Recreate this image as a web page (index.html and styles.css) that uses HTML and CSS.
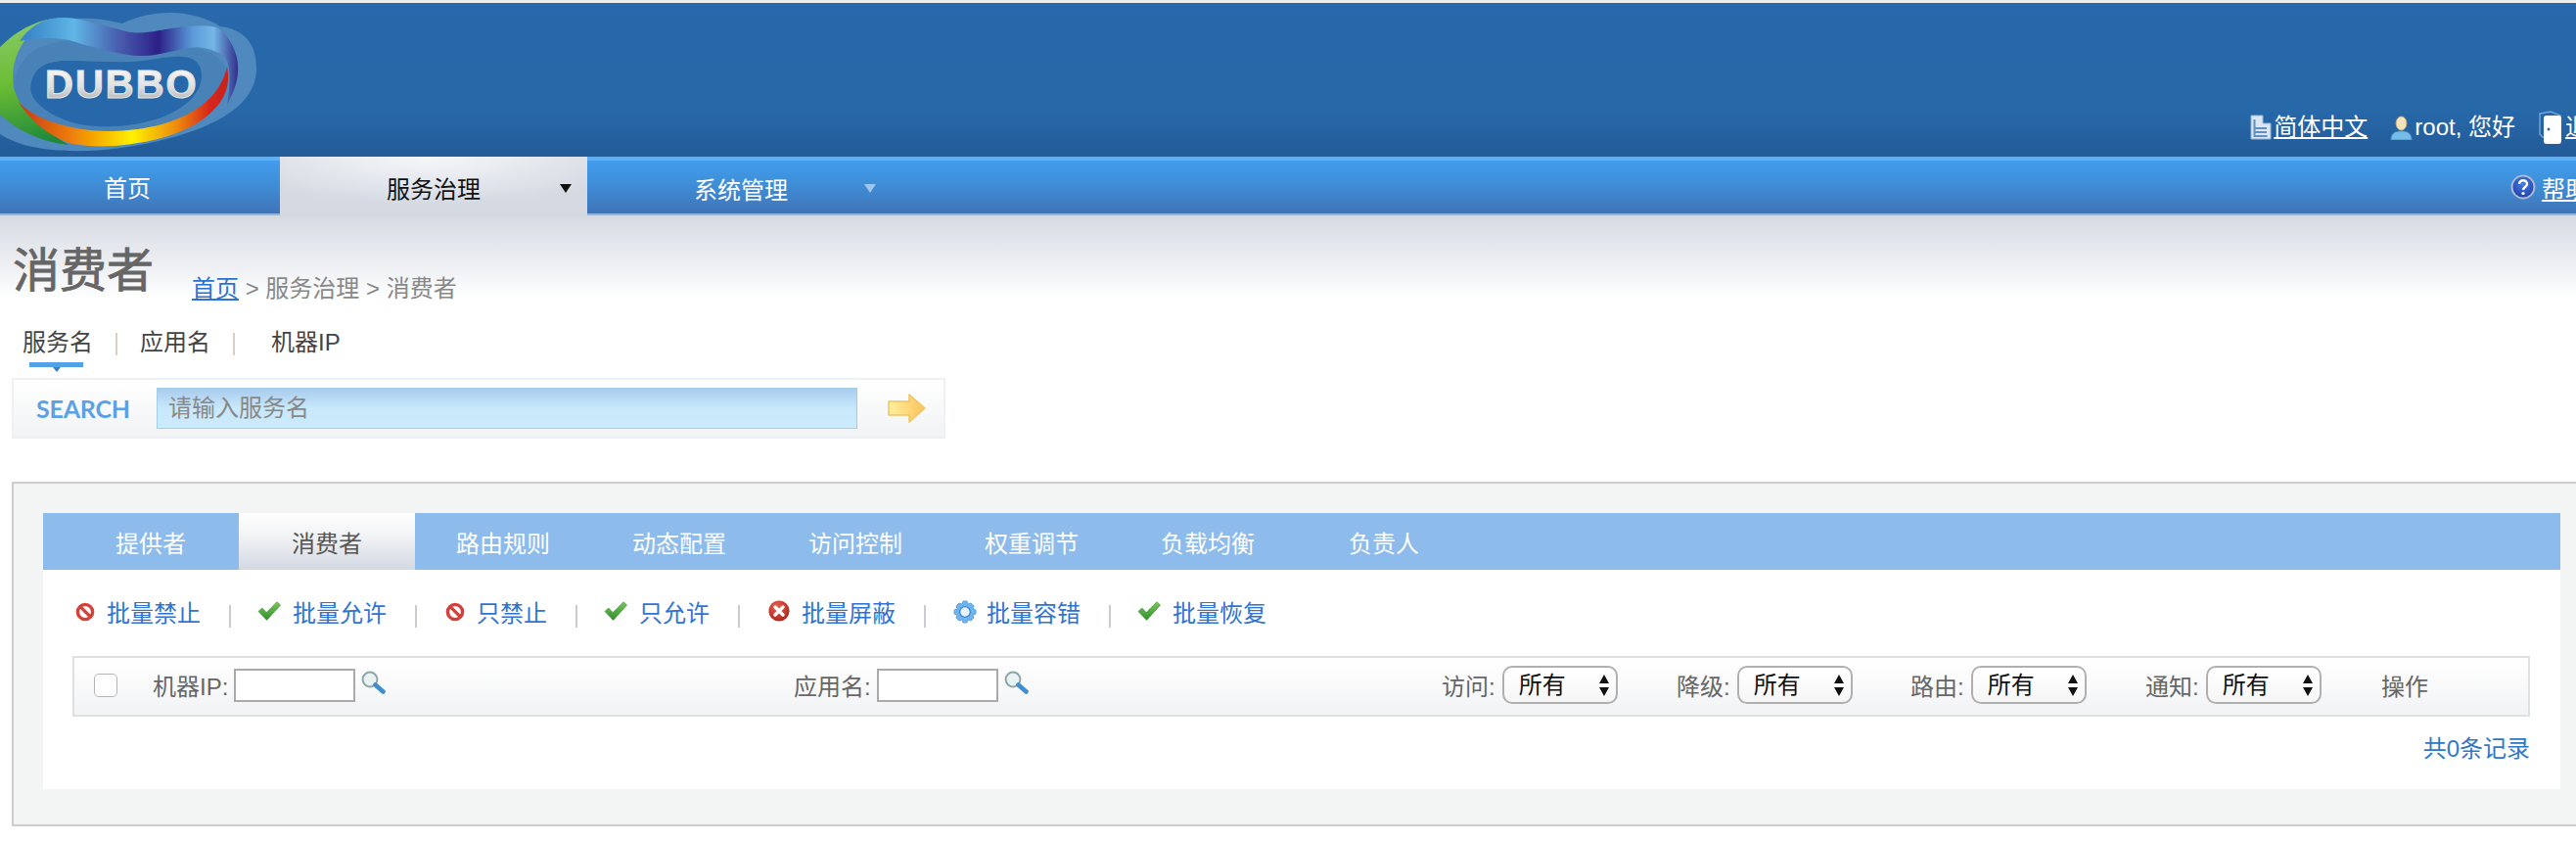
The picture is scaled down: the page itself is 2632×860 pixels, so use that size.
FILE: index.html
```html
<!DOCTYPE html>
<html lang="zh-CN">
<head>
<meta charset="utf-8">
<title>消费者</title>
<link rel="stylesheet" href="styles.css">
</head>
<body>
<svg class="defs" aria-hidden="true">
  <defs>
    <linearGradient id="gCheck" x1="0" y1="0" x2="0" y2="1"><stop offset="0" stop-color="#7cc75a"/><stop offset="1" stop-color="#2f8f2c"/></linearGradient>
    <linearGradient id="gArrow" x1="0" y1="0" x2="1" y2="0"><stop offset="0" stop-color="#fff0a0"/><stop offset="1" stop-color="#fdc15a"/></linearGradient>
    <radialGradient id="gErr" cx=".4" cy=".3" r=".8"><stop offset="0" stop-color="#e8604f"/><stop offset="1" stop-color="#a81f18"/></radialGradient>
    <radialGradient id="gHelp" cx=".5" cy=".35" r=".7"><stop offset="0" stop-color="#4a7de0"/><stop offset="1" stop-color="#1c3ba6"/></radialGradient>
    <symbol id="iBan" viewBox="0 0 20 20">
      <circle cx="10" cy="10" r="7.6" fill="#fff" stroke="#d2423a" stroke-width="3.4"/>
      <path d="M5 4.6 15.4 15" stroke="#d2423a" stroke-width="3.2"/>
    </symbol>
    <symbol id="iCheck" viewBox="0 0 24 20">
      <path d="M1 10.5 4.8 7 9.2 11.6 20 .8 23.6 4 9.6 19.4Z" fill="url(#gCheck)" stroke="#358f2f" stroke-width=".6" stroke-linejoin="round"/>
    </symbol>
    <symbol id="iErr" viewBox="0 0 22 22">
      <circle cx="11" cy="11" r="10.6" fill="url(#gErr)"/>
      <path d="M7 7 15 15M15 7 7 15" stroke="#fff" stroke-width="3.4" stroke-linecap="round"/>
    </symbol>
    <symbol id="iGear" viewBox="0 0 24 24">
      <path d="M10 1h4l1 3 3-1 3 3-1 3 3 1v4l-3 1 1 3-3 3-3-1-1 3h-4l-1-3-3 1-3-3 1-3-3-1v-4l3-1-1-3 3-3 3 1Z" fill="#6fb4ec" stroke="#5fa6e4" stroke-linejoin="round"/>
      <circle cx="12" cy="12" r="5.4" fill="#e6f3fd" stroke="#3f87d4" stroke-width="1.4"/>
    </symbol>
    <symbol id="iMag" viewBox="0 0 25 24">
      <circle cx="9" cy="9" r="7.4" fill="#e9f3f4" stroke="#8fa6a8" stroke-width="2"/>
      <path d="M14.5 14.5 22.5 21.5" stroke="#3f8fd0" stroke-width="4.6" stroke-linecap="round"/>
    </symbol>
    <symbol id="iDoc" viewBox="0 0 22 26">
      <path d="M1 1h12v8h8v16H1Z" fill="#dbe6f2" stroke="#8fb4dc"/>
      <path d="M4.5 5v17h13M5 14h12M5 18h12" fill="none" stroke="#5f8fc4" stroke-width="2"/>
    </symbol>
    <symbol id="iUser" viewBox="0 0 23 25">
      <path d="M1 25c0-7 4-9 10.500-9S22 18 22 25Z" fill="#74bde6" stroke="#4c90c4"/>
      <ellipse cx="11.500" cy="8" rx="5.400" ry="7" fill="#f3e3b8" stroke="#c8b080"/>
    </symbol>
    <symbol id="iDoor" viewBox="0 0 24 34">
      <path d="M1 3 12 1l10 4v24L4 27 1 24Z" fill="none" stroke="#6fa4dc" stroke-width="1.500"/>
      <rect x="5" y="5" width="18" height="29" rx="3" fill="#fff"/>
      <circle cx="10" cy="19" r="1.500" fill="#2c6bb0"/>
    </symbol>
    <symbol id="iHelp" viewBox="0 0 26 26">
      <circle cx="13" cy="13" r="11.500" fill="url(#gHelp)" stroke="#aab8d4" stroke-width="2"/>
      <path d="M9 10c0-5 8-5 8 0 0 3-4 3-4 6" fill="none" stroke="#fff" stroke-width="2.400"/>
      <circle cx="13" cy="19.500" r="1.600" fill="#fff"/>
    </symbol>
    <symbol id="iGo" viewBox="0 0 39 30">
      <path d="M1 8h21V1l16 14-16 14v-7H1Z" fill="url(#gArrow)" stroke="#edc660" stroke-width="1.500" stroke-linejoin="round"/>
    </symbol>
    <symbol id="iUpDown" viewBox="0 0 12 22">
      <path d="M6 0 11 9H1ZM1 13H11L6 22Z" fill="#111"/>
    </symbol>
  </defs>
</svg>

<div class="page">
  <div class="topstrip"></div>

  <header class="header">
    <svg class="logo" viewBox="0 3 265 157" role="img" aria-label="Dubbo">
      <defs>
        <linearGradient id="lgRainbow" x1="18" y1="0" x2="235" y2="0" gradientUnits="userSpaceOnUse">
          <stop offset="0" stop-color="#c23a1c"/><stop offset=".25" stop-color="#ee7c08"/><stop offset=".54" stop-color="#fff000"/><stop offset=".75" stop-color="#ec8a0c"/><stop offset=".9" stop-color="#d8281a"/><stop offset="1" stop-color="#c8201c"/>
        </linearGradient>
        <linearGradient id="lgTop" x1="28" y1="0" x2="244" y2="0" gradientUnits="userSpaceOnUse">
          <stop offset="0" stop-color="#3a86c8"/><stop offset=".22" stop-color="#5fb6e6"/><stop offset=".42" stop-color="#4a62b0"/><stop offset=".62" stop-color="#2c2088"/><stop offset=".78" stop-color="#5a9ad8"/><stop offset=".88" stop-color="#74b8e6"/><stop offset="1" stop-color="#2e2a88"/>
        </linearGradient>
        <linearGradient id="lgGreen" x1="0" y1="20" x2="30" y2="148" gradientUnits="userSpaceOnUse">
          <stop offset="0" stop-color="#8acb6e"/><stop offset=".5" stop-color="#6cbd34"/><stop offset="1" stop-color="#1f8a3a"/>
        </linearGradient>
        <linearGradient id="lgSteel" x1="0" y1="71" x2="0" y2="100" gradientUnits="userSpaceOnUse">
          <stop offset="0" stop-color="#f6f6f6"/><stop offset=".6" stop-color="#e0e0e0"/><stop offset="1" stop-color="#bdbdbd"/>
        </linearGradient>
        <filter id="soft"><feGaussianBlur stdDeviation=".7"/></filter>
      </defs>
      <g filter="url(#soft)">
        <path d="M-8 130C20 160 100 160 170 142 225 128 262 105 262 70 262 45 250 30 225 27 205 14 165 5 125 24 70 10 20 25 5 60-6 85-12 110-8 130Z" fill="#5089bd"/>
        <path d="M14 85C18 55 45 38 90 42 130 48 175 45 205 50 235 58 240 85 225 105 205 130 130 140 80 132 40 125 12 110 14 85Z" fill="#4a82b6"/>
        <path d="M32 84C36 68 48 62 70 62 100 62 130 66 160 60 185 56 200 56 205 70 210 90 195 108 165 120 130 132 90 132 65 122 42 112 28 100 32 84Z" fill="#2567a9"/>
        <path d="M55 19C30 22 8 38-6 55L-6 110C10 130 40 145 70 148 40 130 20 110 14 90 10 65 20 45 32 34Z" fill="url(#lgGreen)"/>
        <path d="M18 103C35 122 70 133 110 134 165 134 222 115 232 68 240 105 205 130 165 141 130 150 95 152 70 146 50 138 32 125 18 103Z" fill="url(#lgRainbow)"/>
        <path d="M20 42C33 23 50 17 67 18 85 19 100 25 133 33 150 35 165 30 183 28 200 26 217 25 225 30 235 38 243 55 243 67 244 80 240 92 232 107 236 85 235 70 232 62 228 54 215 49 200 48 180 50 160 58 143 57 125 57 105 50 83 45 70 40 55 36 20 42Z" fill="url(#lgTop)"/>
      </g>
      <text class="logo-text" x="46" y="100" fill="url(#lgSteel)">DUBBO</text>
    </svg>
    <div class="userbar">
      <svg class="i-doc"><use href="#iDoc"/></svg><a class="ulink" href="#">简体中文</a>
      <svg class="i-user"><use href="#iUser"/></svg><span class="uname">root, 您好</span>
      <svg class="i-door"><use href="#iDoor"/></svg><a class="ulink" href="#">退出</a>
    </div>
  </header>

  <nav class="nav">
    <a class="nav-item nav-home" href="#">首页</a>
    <a class="nav-item nav-active" href="#">服务治理<span class="nav-caret nav-caret-dark"></span></a>
    <a class="nav-item nav-sys" href="#">系统管理<span class="nav-caret nav-caret-light"></span></a>
    <div class="nav-help"><svg class="i-help"><use href="#iHelp"/></svg><a class="ulink" href="#">帮助</a></div>
  </nav>

  <section class="band">
    <div class="titlerow">
      <h1 class="title">消费者</h1>
      <div class="crumbs"><a class="crumb-link" href="#">首页</a> &gt; 服务治理 &gt; 消费者</div>
    </div>
    <div class="subtabs">
      <span class="subtab subtab-on">服务名</span><i class="subsep"></i>
      <span class="subtab">应用名</span><i class="subsep"></i>
      <span class="subtab subtab-last">机器IP</span>
    </div>
    <form class="search">
      <span class="search-label">SEARCH</span>
      <input class="search-input" type="text" placeholder="请输入服务名">
      <svg class="i-go"><use href="#iGo"/></svg>
    </form>
  </section>

  <main class="panel">
    <div class="tabs">
      <a class="tab" href="#">提供者</a>
      <a class="tab tab-on" href="#">消费者</a>
      <a class="tab" href="#">路由规则</a>
      <a class="tab" href="#">动态配置</a>
      <a class="tab" href="#">访问控制</a>
      <a class="tab" href="#">权重调节</a>
      <a class="tab" href="#">负载均衡</a>
      <a class="tab" href="#">负责人</a>
    </div>
    <div class="content">
      <div class="actions">
        <svg class="ic ic-ban"><use href="#iBan"/></svg><a class="act" href="#">批量禁止</a><i class="actsep"></i>
        <svg class="ic ic-check"><use href="#iCheck"/></svg><a class="act" href="#">批量允许</a><i class="actsep"></i>
        <svg class="ic ic-ban"><use href="#iBan"/></svg><a class="act" href="#">只禁止</a><i class="actsep"></i>
        <svg class="ic ic-check"><use href="#iCheck"/></svg><a class="act" href="#">只允许</a><i class="actsep"></i>
        <svg class="ic ic-err"><use href="#iErr"/></svg><a class="act" href="#">批量屏蔽</a><i class="actsep"></i>
        <svg class="ic ic-gear"><use href="#iGear"/></svg><a class="act" href="#">批量容错</a><i class="actsep"></i>
        <svg class="ic ic-check"><use href="#iCheck"/></svg><a class="act" href="#">批量恢复</a>
      </div>
      <div class="filter">
        <div class="cell"><input class="chk" type="checkbox"></div>
        <div class="cell"><label class="flabel">机器IP:</label><input class="finput" type="text"><svg class="i-mag"><use href="#iMag"/></svg></div>
        <div class="cell"><label class="flabel">应用名:</label><input class="finput" type="text"><svg class="i-mag"><use href="#iMag"/></svg></div>
        <div class="cell"><label class="flabel">访问:</label><div class="sel"><select class="sel-box"><option>所有</option></select><svg class="sel-arrows"><use href="#iUpDown"/></svg></div></div>
        <div class="cell"><label class="flabel">降级:</label><div class="sel"><select class="sel-box"><option>所有</option></select><svg class="sel-arrows"><use href="#iUpDown"/></svg></div></div>
        <div class="cell"><label class="flabel">路由:</label><div class="sel"><select class="sel-box"><option>所有</option></select><svg class="sel-arrows"><use href="#iUpDown"/></svg></div></div>
        <div class="cell"><label class="flabel">通知:</label><div class="sel"><select class="sel-box"><option>所有</option></select><svg class="sel-arrows"><use href="#iUpDown"/></svg></div></div>
        <div class="cell flabel">操作</div>
      </div>
      <div class="total">共0条记录</div>
    </div>
  </main>
</div>
</body>
</html>
```

FILE: styles.css
```css
html, body {
  margin: 0;
  padding: 0;
  background: #fff;
  overflow: hidden;
}
body, input, select {
  font-family: "Liberation Sans", "Noto Sans CJK SC", sans-serif;
  font-size: 24px;
}
.defs {
  position: absolute;
  width: 0;
  height: 0;
}
.page {
  width: 2690px;
}
.topstrip {
  height: 3px;
  background: #ececec;
}

/* header */
.header {
  height: 157px;
  display: flex;
  justify-content: space-between;
  background: linear-gradient(#2868ab 0%, #2768a9 70%, #235a97 100%);
}
.logo {
  width: 265px;
  height: 157px;
  flex: none;
}
.logo-text {
  font-family: "Liberation Sans", sans-serif;
  font-weight: 700;
  font-size: 40px;
  letter-spacing: 2px;
  stroke: #e4e4e4;
  stroke-width: 1px;
}
.userbar {
  display: flex;
  align-items: center;
  height: 36px;
  margin-top: 109px;
  padding-right: 21px;
  color: #fff;
  line-height: 28px;
}
.ulink {
  color: #fff;
  text-decoration: underline;
}
.i-doc { width: 22px; height: 26px; margin-right: 2px; }
.i-user { width: 23px; height: 25px; margin-left: 23px; margin-right: 2px; }
.uname { white-space: nowrap; }
.i-door { width: 24px; height: 34px; margin-left: 24px; margin-right: 3px; }

/* nav */
.nav {
  height: 60px;
  display: flex;
  align-items: stretch;
  background: linear-gradient(#419ff0 0%, #3f8fd8 45%, #3f72b6 100%);
  box-shadow: inset 0 4px 0 #62aeef, inset 0 -2px 0 #8db6e6;
}
.nav-item {
  position: relative;
  display: flex;
  align-items: center;
  justify-content: center;
  color: #fff;
  text-decoration: none;
}
.nav-home {
  width: 260px;
  padding-right: 26px;
}
.nav-active {
  width: 314px;
  height: 62px;
  color: #111;
  background: radial-gradient(ellipse 220px 50px at 150px 0, #f6f7f9 0%, #d4d9e2 100%);
}
.nav-sys {
  width: 314px;
  padding-top: 5px;
  box-sizing: border-box;
}
.nav-caret {
  position: absolute;
  top: 28px;
  width: 0;
  height: 0;
  border-left: 6px solid transparent;
  border-right: 6px solid transparent;
  border-top: 9px solid;
}
.nav-caret-dark { left: 286px; border-top-color: #111; }
.nav-caret-light { left: 283px; border-top-color: #9cc6f0; }
.nav-help {
  display: flex;
  align-items: center;
  margin-left: auto;
  padding-right: 45px;
  padding-top: 2px;
}
.i-help { width: 26px; height: 26px; margin-right: 6px; }

/* title band */
.band {
  background: linear-gradient(#d5dae3 0, #e4e7ec 30px, #f0f1f4 55px, #fff 85px);
}
.titlerow {
  display: flex;
  align-items: flex-end;
  padding: 25px 0 0 13px;
  height: 75px;
}
.title {
  margin: 0 0 15px;
  font-size: 48px;
  line-height: 56px;
  font-weight: 400;
  -webkit-text-stroke: 0.8px #666;
  color: #666;
}
.crumbs {
  margin: 0 0 10px 39px;
  color: #888;
  line-height: 30px;
}
.crumb-link { color: #2a74d2; }
.subtabs {
  display: flex;
  align-items: flex-start;
  margin-top: 15px;
  padding-left: 23px;
  color: #444;
}
.subtab {
  position: relative;
  line-height: 30px;
  height: 51px;
}
.subtab-on::after {
  content: "";
  position: absolute;
  left: 7px;
  right: 10px;
  top: 35px;
  height: 5px;
  background: #52a2e6;
}
.subtab-on::before {
  content: "";
  position: absolute;
  left: 31px;
  top: 40px;
  border-left: 4px solid transparent;
  border-right: 4px solid transparent;
  border-top: 5px solid #3f7fc0;
}
.subtab-last { margin-left: 14px; }
.subsep {
  width: 2px;
  height: 23px;
  margin: 5px 23px 0;
  background: #d6d0c8;
}
.search {
  display: flex;
  align-items: center;
  width: 950px;
  height: 58px;
  margin-left: 12px;
  border: 2px solid #eef0f3;
  background: linear-gradient(#fff, #f2f3f5);
}
.search-label {
  flex: none;
  width: 146px;
  padding-left: 23px;
  box-sizing: border-box;
  font-family: Lato, "Liberation Sans", sans-serif;
  font-weight: 700;
  font-size: 25px;
  letter-spacing: -0.2px;
  color: #5aa2e4;
}
.search-input {
  flex: none;
  width: 716px;
  height: 42px;
  padding: 0 0 0 11px;
  box-sizing: border-box;
  border: 1px solid #a4cdea;
  background: linear-gradient(#a9ccee 0, #c8e8fb 50%, #cbecfd 100%);
  outline: 0;
}
.search-input::placeholder { color: #888; }
.i-go { flex: none; width: 39px; height: 30px; margin-left: 31px; }

/* panel */
.panel {
  margin: 44px 8px 0 12px;
  padding: 30px 64px 36px 30px;
  border: 2px solid #cccccc;
  background: #f3f4f4;
}
.tabs {
  display: flex;
  height: 58px;
  padding-left: 20px;
  background: #8dbbec;
}
.tab {
  display: flex;
  align-items: center;
  justify-content: center;
  width: 180px;
  color: #fff;
  text-decoration: none;
}
.tab-on {
  color: #555;
  background: linear-gradient(#fff 0%, #f2f3f5 40%, #d3d8e2 100%);
}
.content {
  height: 224px;
  padding: 30px 31px 0 30px;
  box-sizing: border-box;
  background: #fff;
}
.actions {
  display: flex;
  align-items: flex-start;
  height: 58px;
  padding-left: 3px;
}
.act {
  color: #2f74d2;
  text-decoration: none;
  line-height: 30px;
}
.ic { margin-right: 12px; }
.ic-ban { width: 20px; height: 20px; margin-top: 3px; }
.ic-check { width: 24px; height: 20px; margin-top: 2px; margin-left: -1px; }
.ic-err { width: 22px; height: 22px; margin-top: 1px; }
.ic-gear { width: 24px; height: 24px; margin-top: 1px; margin-right: 10px; }
.actsep {
  width: 2px;
  height: 23px;
  margin: 6px 28px 0 29px;
  background: #c8ccd0;
}
.ic-check + .act + .actsep { margin-right: 29px; }
.filter {
  display: grid;
  grid-template-columns: 80px 655px 662px 240px 239px 240px 241px 1fr;
  align-items: center;
  height: 62px;
  padding-bottom: 3px;
  box-sizing: border-box;
  border: 2px solid #dfe0e2;
  background: linear-gradient(#fff 0%, #f2f3f5 100%);
  color: #666;
}
.cell {
  display: flex;
  align-items: center;
}
.chk {
  appearance: none;
  width: 24px;
  height: 24px;
  margin: 0 0 0 20px;
  border: 1px solid #b4b4b4;
  border-radius: 5px;
  background: #fff;
}
.flabel { color: #666; white-space: nowrap; }
.finput {
  width: 124px;
  height: 34px;
  margin-left: 6px;
  padding: 0;
  box-sizing: border-box;
  border: 2px solid #aaa;
  background: #fff;
}
.i-mag { width: 25px; height: 24px; margin-left: 6px; margin-bottom: 6px; }
.sel {
  position: relative;
  margin-left: 7px;
}
.sel-box {
  appearance: none;
  display: block;
  width: 118px;
  height: 39px;
  padding: 0 0 0 15px;
  box-sizing: border-box;
  border: 2px solid #b0b0b0;
  border-radius: 10px;
  background: linear-gradient(#fff, #f6f6f6);
  color: #111;
}
.sel-arrows {
  position: absolute;
  top: 9px;
  right: 8px;
  width: 12px;
  height: 22px;
  pointer-events: none;
}
.total {
  margin-top: 18px;
  text-align: right;
  color: #2f78c6;
  line-height: 30px;
}
```
